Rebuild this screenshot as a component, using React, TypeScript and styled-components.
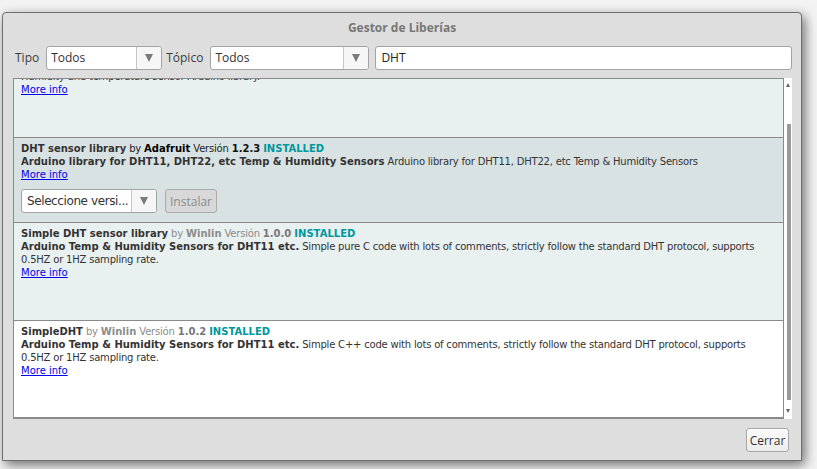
import React, { useLayoutEffect, useRef } from 'react';
import styled, { createGlobalStyle } from 'styled-components';

type Tone = 'odd' | 'even' | 'selected';

interface Library {
  name: string;
  author: string;
  version: string;
  descTitle: string;
  descText: string[];
  tone: Tone;
}

const libraries: Library[] = [
  {
    name: 'DHT sensor library for ESPx',
    author: 'beegee_tokyo',
    version: '1.0.6',
    descTitle: 'Arduino ESP library for DHT11, DHT22, etc Temp & Humidity Sensors',
    descText: ['Optimized libray to match ESP32 requirements.', 'Humidity and temperature sensor Arduino library.'],
    tone: 'odd',
  },
  {
    name: 'DHT sensor library',
    author: 'Adafruit',
    version: '1.2.3',
    descTitle: 'Arduino library for DHT11, DHT22, etc Temp & Humidity Sensors',
    descText: ['Arduino library for DHT11, DHT22, etc Temp & Humidity Sensors'],
    tone: 'selected',
  },
  {
    name: 'Simple DHT sensor library',
    author: 'Winlin',
    version: '1.0.0',
    descTitle: 'Arduino Temp & Humidity Sensors for DHT11 etc.',
    descText: [
      'Simple pure C code with lots of comments, strictly follow the standard DHT protocol, supports',
      '0.5HZ or 1HZ sampling rate.',
    ],
    tone: 'odd',
  },
  {
    name: 'SimpleDHT',
    author: 'Winlin',
    version: '1.0.2',
    descTitle: 'Arduino Temp & Humidity Sensors for DHT11 etc.',
    descText: [
      'Simple C++ code with lots of comments, strictly follow the standard DHT protocol, supports',
      '0.5HZ or 1HZ sampling rate.',
    ],
    tone: 'even',
  },
];

const toneBg: Record<Tone, string> = {
  odd: '#e9f0f0',
  even: '#ffffff',
  selected: '#d9e2e3',
};

const GlobalStyle = createGlobalStyle`
  html, body {
    margin: 0;
    padding: 0;
    background: #f3f3f3;
  }
  body {
    width: 817px;
    height: 469px;
    overflow: hidden;
  }
`;

const Dialog = styled.div`
  box-sizing: border-box;
  width: 800px;
  margin: 12px 0 0 2px;
  border: 1px solid #6e6e6e;
  border-radius: 4px 4px 0 0;
  background: #dedede;
  box-shadow: 3px 4px 12px rgba(0, 0, 0, 0.55);
  display: flex;
  flex-direction: column;
  font-family: 'Open Sans', 'Noto Sans', sans-serif;
  color: #333;
`;

const TitleBar = styled.div`
  height: 32px;
  padding-bottom: 4px;
  box-sizing: border-box;
  display: flex;
  align-items: center;
  justify-content: center;
  font-size: 12px;
  font-weight: 700;
  color: #777;
`;

const FilterRow = styled.div`
  height: 25px;
  padding: 0 9px 0 12px;
  display: flex;
  align-items: center;
`;

const FilterLabel = styled.span<{ $left?: number }>`
  font-size: 12px;
  color: #3c3c3c;
  margin: 0 7px 0 ${(p) => p.$left ?? 0}px;
`;

const Select = styled.div<{ $width: number }>`
  box-sizing: border-box;
  width: ${(p) => p.$width}px;
  height: 24px;
  display: flex;
  border: 1px solid #a3a3a3;
  border-radius: 3px;
  background: #fff;
`;

const SelectValue = styled.span<{ $tight?: boolean }>`
  flex: 1;
  padding-left: ${(p) => (p.$tight ? 5 : 4)}px;
  display: flex;
  align-items: center;
  font-size: 12px;
  letter-spacing: ${(p) => (p.$tight ? '-0.4px' : '0')};
  color: #333;
  white-space: nowrap;
`;

const SelectArrow = styled.span`
  width: 24px;
  border-left: 1px solid #c6c6c6;
  border-radius: 0 2px 2px 0;
  background: #f6f6f6;
  display: flex;
  align-items: center;
  justify-content: center;
`;

const Triangle = styled.span<{ $up?: boolean; $size: number; $color: string }>`
  width: 0;
  height: 0;
  border-left: ${(p) => p.$size / 2}px solid transparent;
  border-right: ${(p) => p.$size / 2}px solid transparent;
  ${(p) =>
    p.$up
      ? `border-bottom: ${p.$size - 1}px solid ${p.$color};`
      : `border-top: ${p.$size - 1}px solid ${p.$color};`}
`;

const SearchBox = styled.div`
  flex: 1;
  height: 24px;
  box-sizing: border-box;
  margin-left: 6px;
  padding-left: 5px;
  display: flex;
  align-items: center;
  border: 1px solid #a3a3a3;
  border-radius: 3px;
  background: #fff;
  font-size: 12px;
  color: #222;
`;

const ListPanel = styled.div`
  margin: 8px 9px 0 10px;
  height: 341px;
  display: flex;
`;

const ListBox = styled.div`
  flex: 1;
  border: 1px solid #8a8a8a;
  border-bottom-width: 2px;
  background: #fff;
  overflow: hidden;
`;

const ScrollBar = styled.div`
  width: 8px;
  background: #fff;
  display: flex;
  flex-direction: column;
  align-items: center;
  padding: 5px 0 6px;
  box-sizing: border-box;
`;

const ScrollTrack = styled.div`
  flex: 1;
  width: 4px;
  margin-left: 2px;
`;

const ScrollThumb = styled.div<{ $top: number; $height: number }>`
  margin-top: ${(p) => p.$top}px;
  height: ${(p) => p.$height}px;
  background: #9a9a9a;
`;

const Item = styled.div<{ $tone: Tone }>`
  padding: 4px 7px 9px;
  background: ${(p) => toneBg[p.$tone]};
  border-bottom: 1px solid #8a8a8a;
  font-family: 'DejaVu Sans', Verdana, sans-serif;
  font-size: 10px;
  line-height: 13px;
  letter-spacing: -0.2px;
  color: #333;
`;

const Line = styled.div`
  white-space: nowrap;
`;

const Strong = styled.b<{ $color?: string }>`
  font-weight: 700;
  letter-spacing: 0;
  color: ${(p) => p.$color ?? 'inherit'};
`;

const Meta = styled.span<{ $muted: boolean }>`
  color: ${(p) => (p.$muted ? '#8c8c8c' : '#222')};
`;

const Installed = styled.b`
  letter-spacing: 0;
  color: #00979c;
`;

const MoreInfo = styled.a`
  color: #0000ee;
  text-decoration: underline;
  letter-spacing: 0;
  cursor: pointer;
`;

const ActionRow = styled.div<{ $visible: boolean }>`
  margin-top: 8px;
  height: 24px;
  display: flex;
  gap: 8px;
  visibility: ${(p) => (p.$visible ? 'visible' : 'hidden')};
`;

const InstallButton = styled.button`
  box-sizing: border-box;
  width: 52px;
  height: 24px;
  padding: 0;
  border: 1px solid #ababab;
  border-radius: 3px;
  background: #d8d8d8;
  font-family: 'Open Sans', 'Noto Sans', sans-serif;
  font-size: 12px;
  color: #8c8c8c;
`;

const Footer = styled.div`
  padding: 9px 12px 8px;
  display: flex;
  justify-content: flex-end;
`;

const CloseButton = styled.button`
  box-sizing: border-box;
  height: 24px;
  width: 43px;
  padding: 0;
  border: 1px solid #a8a8a8;
  border-radius: 3px;
  background: linear-gradient(#fbfbfb, #ececec);
  font-family: 'Open Sans', 'Noto Sans', sans-serif;
  font-size: 12px;
  color: #333;
`;

const LibraryItem: React.FC<{ lib: Library }> = ({ lib }) => {
  const selected = lib.tone === 'selected';
  return (
    <Item $tone={lib.tone}>
      <Line>
        <Strong>{lib.name}</Strong>{' '}
        <Meta $muted={!selected}>
          by <Strong $color={selected ? '#000' : undefined}>{lib.author}</Strong> Versión{' '}
          <Strong $color={selected ? '#111' : '#777'}>{lib.version}</Strong>
        </Meta>{' '}
        <Installed>INSTALLED</Installed>
      </Line>
      <Line>
        <Strong>{lib.descTitle}</Strong> {lib.descText[0]}
      </Line>
      {lib.descText.slice(1).map((t) => (
        <Line key={t}>{t}</Line>
      ))}
      <Line>
        <MoreInfo>More info</MoreInfo>
      </Line>
      <ActionRow $visible={selected}>
        <Select $width={136}>
          <SelectValue $tight>Seleccione versi...</SelectValue>
          <SelectArrow>
            <Triangle $size={9} $color="#7a7a7a" />
          </SelectArrow>
        </Select>
        <InstallButton disabled>Instalar</InstallButton>
      </ActionRow>
    </Item>
  );
};

const App: React.FC = () => {
  const listRef = useRef<HTMLDivElement>(null);

  useLayoutEffect(() => {
    if (listRef.current) listRef.current.scrollTop = 39;
  }, []);

  return (
    <>
      <GlobalStyle />
      <Dialog>
        <TitleBar>Gestor de Liberías</TitleBar>
        <FilterRow>
          <FilterLabel>Tipo</FilterLabel>
          <Select $width={116}>
            <SelectValue>Todos</SelectValue>
            <SelectArrow>
              <Triangle $size={9} $color="#7a7a7a" />
            </SelectArrow>
          </Select>
          <FilterLabel $left={4}>Tópico</FilterLabel>
          <Select $width={159}>
            <SelectValue>Todos</SelectValue>
            <SelectArrow>
              <Triangle $size={9} $color="#7a7a7a" />
            </SelectArrow>
          </Select>
          <SearchBox>DHT</SearchBox>
        </FilterRow>
        <ListPanel>
          <ListBox ref={listRef}>
            {libraries.map((lib) => (
              <LibraryItem key={lib.name} lib={lib} />
            ))}
          </ListBox>
          <ScrollBar>
            <Triangle $up $size={5} $color="#666" />
            <ScrollTrack>
              <ScrollThumb $top={37} $height={276} />
            </ScrollTrack>
            <Triangle $size={5} $color="#666" />
          </ScrollBar>
        </ListPanel>
        <Footer>
          <CloseButton>Cerrar</CloseButton>
        </Footer>
      </Dialog>
    </>
  );
};

export default App;
